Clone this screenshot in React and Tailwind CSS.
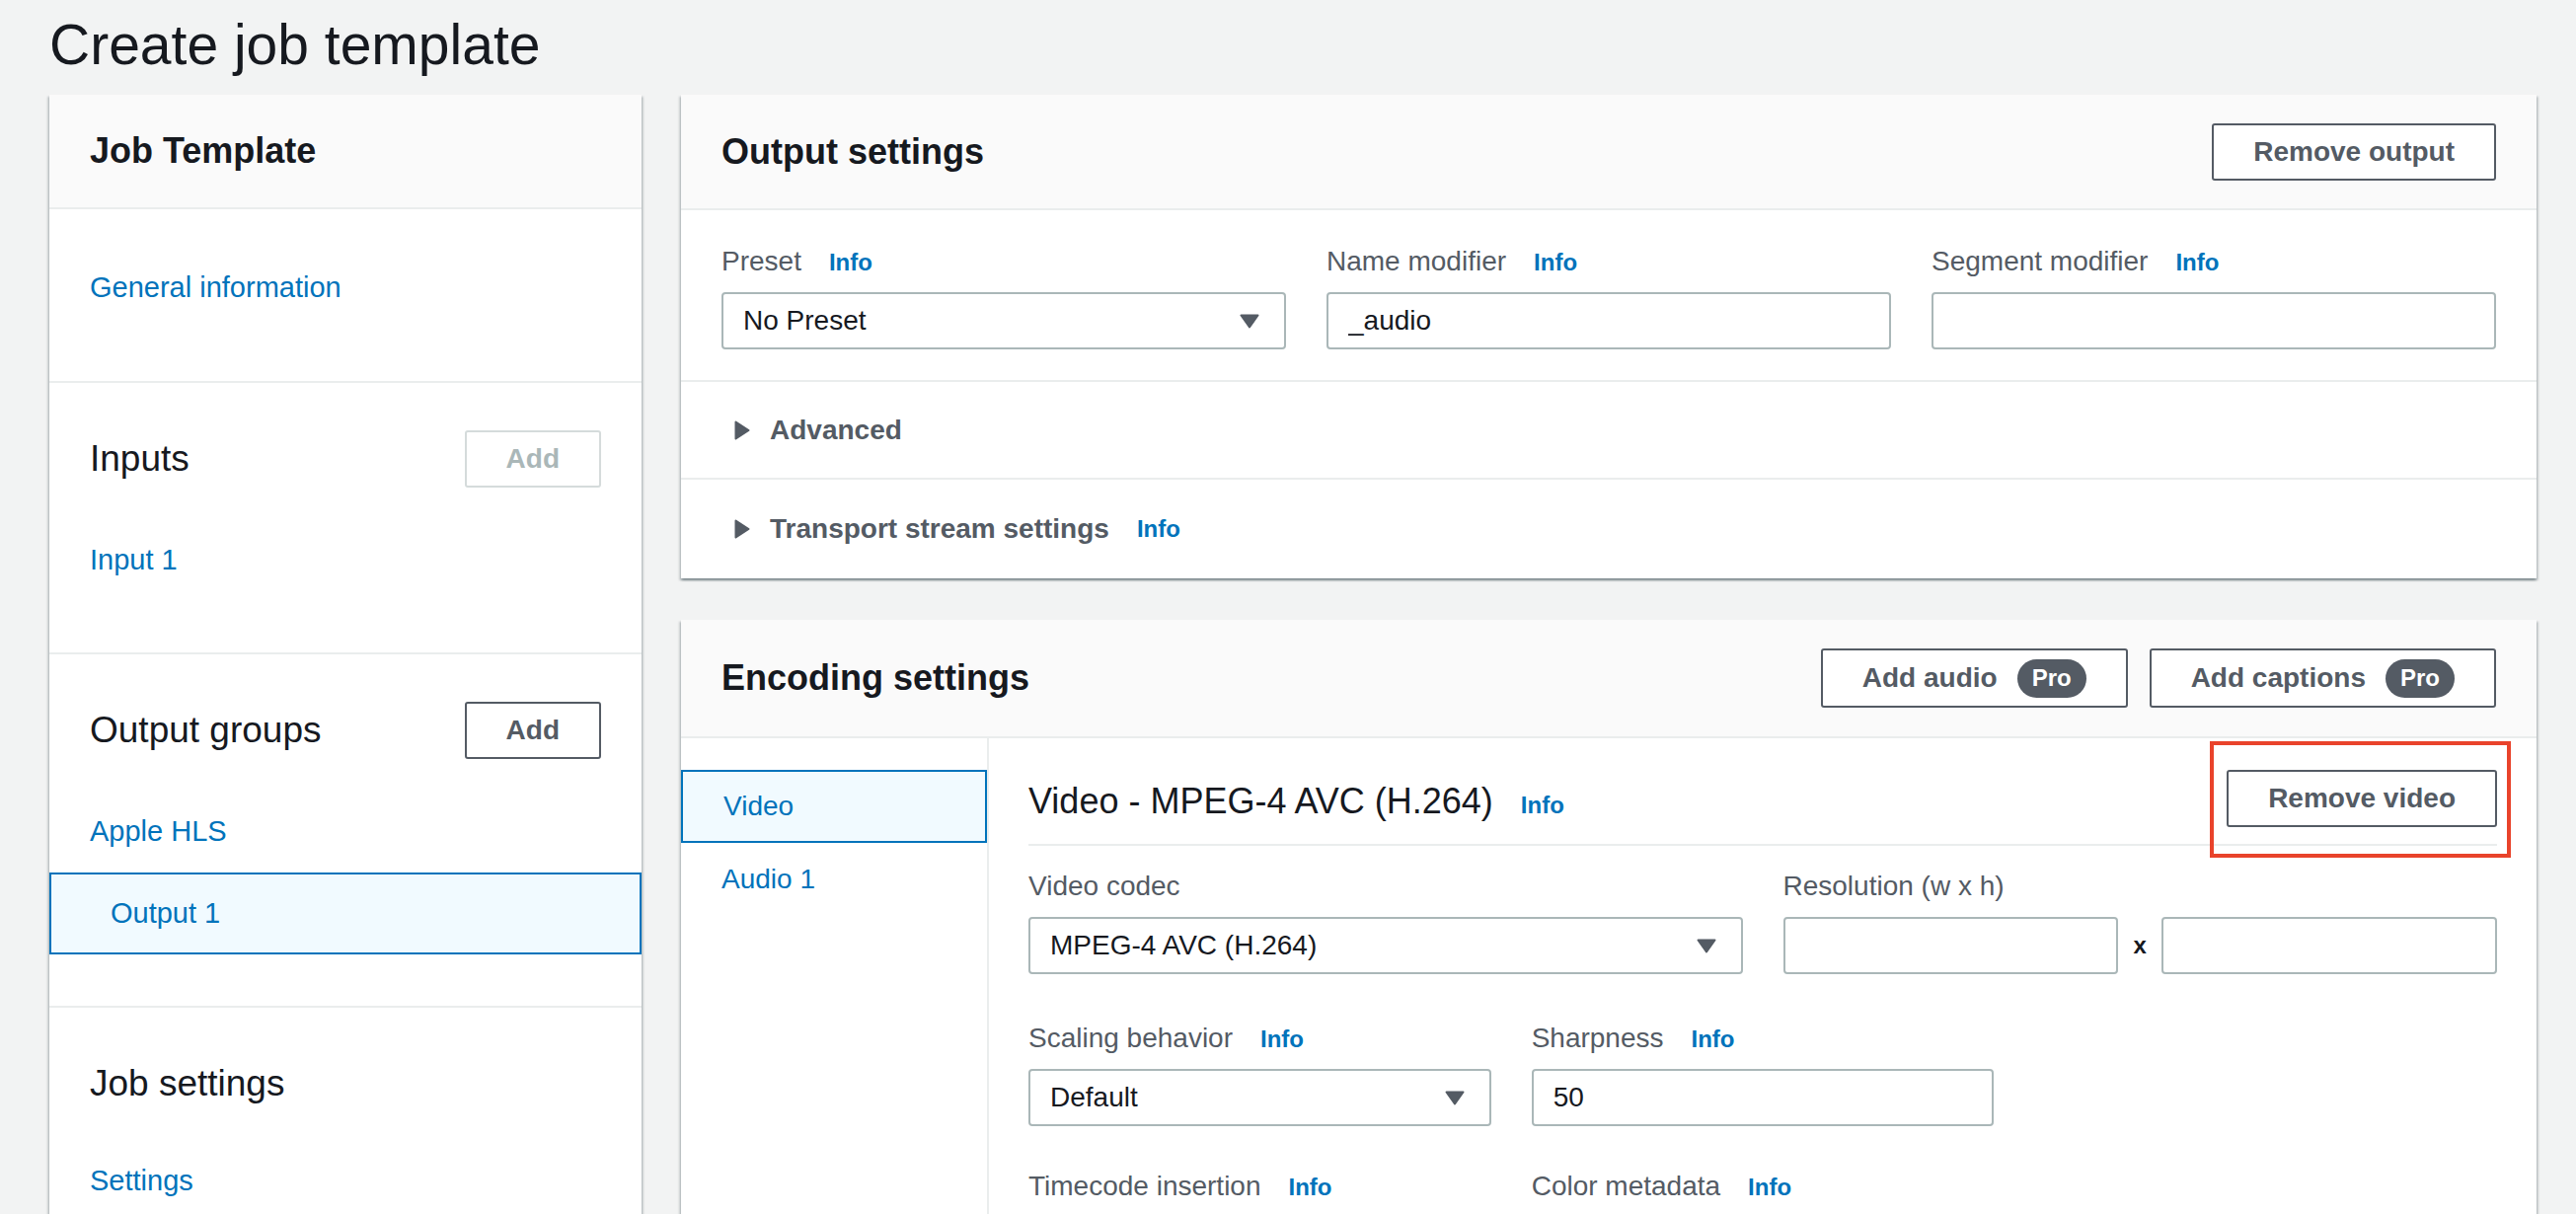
import React from 'react';

// Panel shadow in the AWS console style (2x scale)
const panel =
  'bg-white shadow-[0_2px_2px_0_rgba(0,28,36,0.3),2px_2px_2px_0_rgba(0,28,36,0.15),-2px_2px_2px_0_rgba(0,28,36,0.15)]';

function Info() {
  return <span className="ml-[28px] text-[24px] font-bold text-[#0073bb]">Info</span>;
}

function Label({ children, info }) {
  return (
    <div className="h-[40px] leading-[40px] text-[28px] text-[#545b64] whitespace-nowrap">
      {children}
      {info && <Info />}
    </div>
  );
}

function Caret() {
  return (
    <svg width="20" height="15" viewBox="0 0 20 15" className="shrink-0">
      <path d="M1.5 1.5h17L10 13.5z" fill="#545b64" stroke="#545b64" strokeWidth="2" strokeLinejoin="round" />
    </svg>
  );
}

function Select({ value }) {
  return (
    <div className="mt-[11px] h-[58px] flex items-center justify-between border-2 border-[#aab7b8] rounded-[4px] bg-white pl-[20px] pr-[25px] text-[28px] text-[#16191f]">
      <span>{value}</span>
      <Caret />
    </div>
  );
}

function TextInput({ value = '', className = '' }) {
  return (
    <input
      readOnly
      value={value}
      className={`h-[58px] w-full min-w-0 border-2 border-[#aab7b8] rounded-[4px] bg-white px-[20px] text-[28px] text-[#16191f] outline-none ${className}`}
    />
  );
}

function Button({ children, disabled }) {
  return (
    <button
      className={
        disabled
          ? 'h-[58px] px-[40px] border-2 border-[#d5dbdb] rounded-[3px] bg-white text-[28px] font-bold text-[#aab7b8] whitespace-nowrap'
          : 'h-[58px] px-[40px] border-2 border-[#545b64] rounded-[3px] bg-white text-[28px] font-bold text-[#545b64] whitespace-nowrap'
      }
    >
      {children}
    </button>
  );
}

function ProButton({ children }) {
  return (
    <button className="h-[60px] px-[40px] flex items-center gap-[20px] border-2 border-[#545b64] rounded-[3px] bg-white text-[28px] font-bold text-[#545b64] whitespace-nowrap">
      {children}
      <span className="h-[39px] px-[15px] flex items-center rounded-full bg-[#545b64] text-[24px] text-white">Pro</span>
    </button>
  );
}

function NavItem({ children, selected }) {
  return (
    <div
      className={
        selected
          ? 'h-[83px] flex items-center pl-[60px] border-2 border-[#0073bb] bg-[#f1faff] text-[29px] text-[#0073bb]'
          : 'h-[83px] flex items-center pl-[41px] text-[29px] text-[#0073bb]'
      }
    >
      {children}
    </div>
  );
}

function NavSection({ title, button, children, last }) {
  return (
    <div className={last ? 'pt-[48px] pb-[56px]' : 'pt-[48px] pb-[52px] border-b-2 border-[#eaeded]'}>
      <div className="h-[58px] px-[41px] flex items-center justify-between">
        <h3 className="text-[37px] leading-[48px] text-[#16191f]">{title}</h3>
        {button}
      </div>
      <div className={last ? 'mt-[28px]' : 'mt-[32px]'}>{children}</div>
    </div>
  );
}

function Expander({ children, info, border }) {
  return (
    <div className={border ? 'h-[99px] flex items-center pl-[54px] border-b-2 border-[#eaeded]' : 'h-[100px] flex items-center pl-[54px]'}>
      <svg width="16" height="20" viewBox="0 0 16 20" className="shrink-0">
        <path d="M1.5 1.5l13 8.5-13 8.5z" fill="#545b64" stroke="#545b64" strokeWidth="2" strokeLinejoin="round" />
      </svg>
      <span className="ml-[20px] text-[28px] font-bold text-[#545b64]">{children}</span>
      {info && <Info />}
    </div>
  );
}

export default function App() {
  return (
    <div className="min-h-screen bg-[#f2f3f3] pl-[50px] pr-[40px] pb-[80px] font-['Liberation_Sans',Arial,sans-serif] text-[#16191f]">
      <h1 className="pt-[13px] text-[57px] leading-[64px] font-normal">Create job template</h1>

      <div className="mt-[19px] grid grid-cols-[600px_1fr] gap-[40px] items-start">
        {/* Left navigation */}
        <aside className={panel}>
          <div className="h-[116px] px-[41px] flex items-center bg-[#fafafa] border-b-2 border-[#eaeded]">
            <h2 className="text-[36px] leading-[48px] font-bold">Job Template</h2>
          </div>

          <div className="pt-[38px] pb-[53px] border-b-2 border-[#eaeded]">
            <NavItem>General information</NavItem>
          </div>

          <NavSection title="Inputs" button={<Button disabled>Add</Button>}>
            <NavItem>Input 1</NavItem>
          </NavSection>

          <NavSection title="Output groups" button={<Button>Add</Button>}>
            <NavItem>Apple HLS</NavItem>
            <NavItem selected>Output 1</NavItem>
          </NavSection>

          <NavSection title="Job settings" last>
            <NavItem>Settings</NavItem>
          </NavSection>
        </aside>

        <main className="flex flex-col gap-[42px]">
          {/* Output settings */}
          <section className={panel}>
            <div className="h-[117px] px-[41px] flex items-center justify-between bg-[#fafafa] border-b-2 border-[#eaeded]">
              <h2 className="text-[36px] leading-[48px] font-bold">Output settings</h2>
              <Button>Remove output</Button>
            </div>
            <div className="px-[41px] pt-[32px] pb-[31px] grid grid-cols-3 gap-x-[41px] border-b-2 border-[#eaeded]">
              <div>
                <Label info>Preset</Label>
                <Select value="No Preset" />
              </div>
              <div>
                <Label info>Name modifier</Label>
                <TextInput value="_audio" className="mt-[11px]" />
              </div>
              <div>
                <Label info>Segment modifier</Label>
                <TextInput className="mt-[11px]" />
              </div>
            </div>
            <Expander border>Advanced</Expander>
            <Expander info>Transport stream settings</Expander>
          </section>

          {/* Encoding settings */}
          <section className={panel}>
            <div className="h-[120px] px-[41px] flex items-center justify-between bg-[#fafafa] border-b-2 border-[#eaeded]">
              <h2 className="text-[36px] leading-[48px] font-bold">Encoding settings</h2>
              <div className="flex items-center gap-[22px]">
                <ProButton>Add audio</ProButton>
                <ProButton>Add captions</ProButton>
              </div>
            </div>

            <div className="flex">
              <div className="w-[312px] shrink-0 border-r-2 border-[#eaeded] pt-[32px]">
                <div className="h-[74px] flex items-center pl-[41px] border-2 border-[#0073bb] bg-[#f1faff] text-[28px] text-[#0073bb]">
                  Video
                </div>
                <div className="h-[74px] flex items-center pl-[41px] text-[28px] text-[#0073bb]">Audio 1</div>
              </div>

              <div className="flex-1 min-w-0 px-[40px] pt-[32px] pb-[120px]">
                <div className="pb-[17px] border-b-2 border-[#eaeded]">
                  <div className="h-[58px] flex items-center justify-between">
                    <h3 className="pt-[10px] text-[36px] leading-[48px] whitespace-nowrap">
                      Video - MPEG-4 AVC (H.264)
                      <Info />
                    </h3>
                    <div className="relative">
                      <Button>Remove video</Button>
                      <div className="absolute -left-[17px] -right-[14px] -top-[29px] -bottom-[31px] border-4 border-[#e9432b] pointer-events-none" />
                    </div>
                  </div>
                </div>

                <div className="mt-[21px] grid grid-cols-2 gap-x-[41px]">
                  <div>
                    <Label>Video codec</Label>
                    <Select value="MPEG-4 AVC (H.264)" />
                  </div>
                  <div>
                    <Label>Resolution (w x h)</Label>
                    <div className="mt-[11px] flex items-center">
                      <TextInput />
                      <span className="w-[44px] shrink-0 text-center text-[24px] leading-none font-bold text-[#16191f]">x</span>
                      <TextInput />
                    </div>
                  </div>
                </div>

                <div className="mt-[45px] grid grid-cols-3 gap-x-[41px]">
                  <div>
                    <Label info>Scaling behavior</Label>
                    <Select value="Default" />
                  </div>
                  <div>
                    <Label info>Sharpness</Label>
                    <TextInput value="50" className="mt-[11px]" />
                  </div>
                </div>

                <div className="mt-[41px] grid grid-cols-3 gap-x-[41px]">
                  <Label info>Timecode insertion</Label>
                  <Label info>Color metadata</Label>
                </div>
              </div>
            </div>
          </section>
        </main>
      </div>
    </div>
  );
}
